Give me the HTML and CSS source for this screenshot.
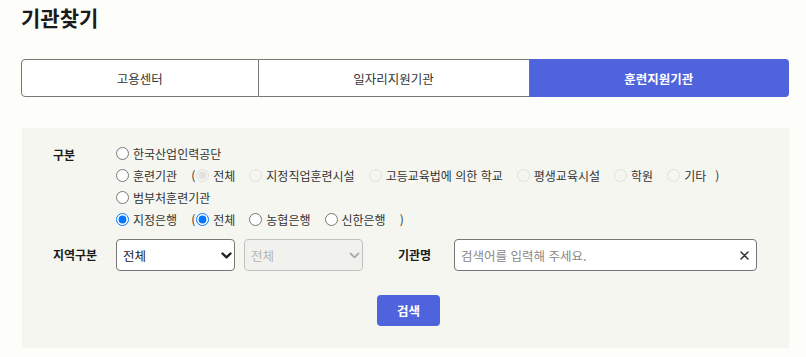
FILE: index.html
```html
<!DOCTYPE html>
<html lang="ko">
<head>
<meta charset="utf-8">
<link rel="stylesheet" href="styles.css">
</head>
<body>
<div class="page">
  <h1 class="title">기관찾기</h1>
  <div class="tabs">
    <div class="tab">고용센터</div>
    <div class="tab">일자리지원기관</div>
    <div class="tab active">훈련지원기관</div>
  </div>
  <div class="panel">
    <div class="row">
      <div class="label top">구분</div>
      <div class="options">
        <div class="line"><label class="opt"><input type="radio" name="g">한국산업인력공단</label></div>
        <div class="line">
          <label class="opt"><input type="radio" name="g">훈련기관</label>
          <span class="paren">(</span>
          <label class="opt dis"><input type="radio" name="t" checked disabled>전체</label>
          <label class="opt dis"><input type="radio" name="t" disabled>지정직업훈련시설</label>
          <label class="opt dis"><input type="radio" name="t" disabled>고등교육법에 의한 학교</label>
          <label class="opt dis"><input type="radio" name="t" disabled>평생교육시설</label>
          <label class="opt dis"><input type="radio" name="t" disabled>학원</label>
          <label class="opt dis last"><input type="radio" name="t" disabled>기타</label>
          <span class="paren">)</span>
        </div>
        <div class="line"><label class="opt"><input type="radio" name="g">범부처훈련기관</label></div>
        <div class="line">
          <label class="opt"><input type="radio" name="g" checked>지정은행</label>
          <span class="paren">(</span>
          <label class="opt"><input type="radio" name="b" checked>전체</label>
          <label class="opt"><input type="radio" name="b">농협은행</label>
          <label class="opt"><input type="radio" name="b">신한은행</label>
          <span class="paren">)</span>
        </div>
      </div>
    </div>
    <div class="row region">
      <div class="label">지역구분</div>
      <div class="selwrap">
        <select class="sel"><option>전체</option></select>
        <svg class="chev" width="11" height="7" viewBox="0 0 11 7"><path d="M1.5 1.5 L5.5 5.3 L9.5 1.5" fill="none" stroke="#222" stroke-width="2.4" stroke-linecap="round" stroke-linejoin="round"/></svg>
      </div>
      <div class="selwrap disabled">
        <select class="sel" disabled><option>전체</option></select>
        <svg class="chev" width="11" height="7" viewBox="0 0 11 7"><path d="M1.5 1.5 L5.5 5.3 L9.5 1.5" fill="none" stroke="#aaa" stroke-width="1.8" stroke-linecap="round" stroke-linejoin="round"/></svg>
      </div>
      <div class="label name">기관명</div>
      <div class="inputwrap">
        <input class="text" type="text" placeholder="검색어를 입력해 주세요.">
        <svg class="clear" width="9" height="9" viewBox="0 0 9 9"><path d="M1 1 L8 8 M8 1 L1 8" stroke="#333" stroke-width="1.5" stroke-linecap="round"/></svg>
      </div>
    </div>
    <div class="actions">
      <button class="btn">검색</button>
    </div>
  </div>
</div>
</body>
</html>
```
FILE: styles.css
```css
html, body {
  margin: 0;
  padding: 0;
  background: #fdfdf9;
}
body {
  font-family: "Noto Sans CJK KR", "Noto Sans", sans-serif;
  color: #222;
  font-size: 12px;
}
.page {
  padding: 0 17px 0 21px;
}
.title {
  margin: 0;
  padding-top: 2px;
  font-size: 21px;
  font-weight: 700;
  line-height: 30px;
  color: #1a1a1a;
}
.tabs {
  display: flex;
  margin-top: 27px;
  height: 38px;
}
.tab {
  flex: 1 1 auto;
  display: flex;
  align-items: center;
  justify-content: center;
  border: 1px solid #777;
  border-left: none;
  font-size: 12.5px;
  color: #333;
  background: #fff;
  box-sizing: border-box;
}
.tab:first-child {
  border-left: 1px solid #777;
  border-radius: 4px 0 0 4px;
}
.tab.active {
  background: #4f64dc;
  border-color: #4f64dc;
  color: #fff;
  font-weight: 700;
  border-radius: 0 4px 4px 0;
}
.panel {
  margin-top: 31px;
  margin-left: 1px;
  background: #f6f6f1;
  padding: 14px 31px 22px 31px;
}
.row {
  display: flex;
}
.label {
  width: 63px;
  flex: none;
  font-weight: 700;
  font-size: 12px;
  color: #1a1a1a;
}
.label.top {
  line-height: 22px;
  padding-top: 2px;
}
.options {
  display: flex;
  flex-direction: column;
}
.line {
  display: flex;
  align-items: center;
  height: 22px;
  white-space: nowrap;
}
.opt {
  display: flex;
  align-items: center;
  margin-right: 14px;
  color: #333;
}
.opt.last {
  margin-right: 9px;
}
.opt input {
  width: 13px;
  height: 13px;
  margin: 0 4px 0 0;
}
.opt.dis input {
  opacity: 0.5;
}
.paren {
  margin: 0 1px 0 0;
  color: #333;
}
.region {
  margin-top: 9px;
  align-items: center;
  height: 32px;
}
.region .label {
  line-height: 32px;
}
.selwrap {
  position: relative;
  width: 119px;
  height: 32px;
  margin-right: 9px;
}
.sel {
  appearance: none;
  -webkit-appearance: none;
  width: 100%;
  height: 100%;
  border: 1px solid #777;
  border-radius: 4px;
  background: #fff;
  font-family: inherit;
  font-size: 12.5px;
  color: #222;
  padding: 0 0 0 6px;
  box-sizing: border-box;
}
.selwrap.disabled .sel {
  background: #f0f0ec;
  border-color: #aaa;
  color: #999;
}
.chev {
  position: absolute;
  right: 3px;
  top: 13px;
  pointer-events: none;
}
.label.name {
  margin-left: 26px;
  width: 56px;
}
.inputwrap {
  position: relative;
  width: 303px;
  height: 32px;
}
.text {
  width: 100%;
  height: 100%;
  box-sizing: border-box;
  border: 1px solid #777;
  border-radius: 4px;
  background: #fff;
  font-family: inherit;
  font-size: 12.5px;
  padding: 0 28px 0 6px;
}
.text::placeholder {
  color: #888;
}
.clear {
  position: absolute;
  right: 8px;
  top: 12px;
}
.actions {
  display: flex;
  justify-content: center;
  margin-top: 24px;
}
.btn {
  width: 63px;
  height: 31px;
  border: none;
  border-radius: 4px;
  background: #4f64dc;
  color: #fff;
  font-family: inherit;
  font-weight: 700;
  font-size: 12.5px;
  margin-left: 6px;
}
```
